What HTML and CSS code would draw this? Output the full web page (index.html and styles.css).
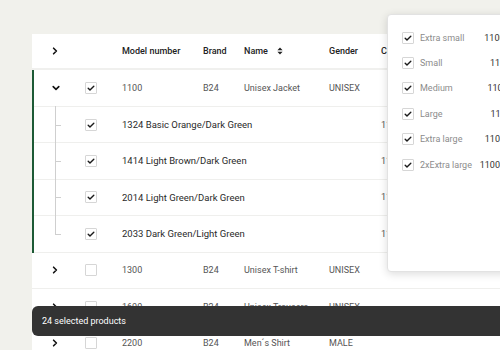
FILE: index.html
```html
<!DOCTYPE html>
<html>
<head>
<meta charset="utf-8">
<link rel="stylesheet" href="styles.css">
</head>
<body>
<div class="page">
  <div class="table">
    <div class="row head">
      <div class="c-exp"><svg class="chev" width="8" height="8" viewBox="0 0 8 8"><path d="M2.6 1.2 L5.4 4 L2.6 6.8"/></svg></div>
      <div class="c-chk"></div>
      <div>Model number</div>
      <div>Brand</div>
      <div class="sort">Name <svg width="6" height="8" viewBox="0 0 6 8"><path d="M3 0.6 L5.6 3.2 L0.4 3.2 Z M3 7.4 L5.6 4.8 L0.4 4.8 Z"/></svg></div>
      <div>Gender</div>
      <div>Color</div>
      <div>Sizes</div>
    </div>
    <div class="group">
      <div class="row">
        <div class="c-exp"><svg class="chev" width="8" height="8" viewBox="0 0 8 8"><path d="M1.2 2.6 L4 5.4 L6.8 2.6"/></svg></div>
        <div class="c-chk"><span class="cb"><svg width="12" height="12" viewBox="0 0 12 12"><path d="M3.2 6.2 L5 8 L8.8 4.2"/></svg></span></div>
        <div>1100</div>
        <div>B24</div>
        <div>Unisex Jacket</div>
        <div>UNISEX</div>
      </div>
      <div class="row sub">
        <div class="c-exp tree"></div>
        <div class="c-chk"><span class="cb"><svg width="12" height="12" viewBox="0 0 12 12"><path d="M3.2 6.2 L5 8 L8.8 4.2"/></svg></span></div>
        <div class="variant">1324 Basic Orange/Dark Green</div>
        <div>1100-1324</div>
        <div class="link">Extra small-2xExtra large</div>
      </div>
      <div class="row sub">
        <div class="c-exp tree"></div>
        <div class="c-chk"><span class="cb"><svg width="12" height="12" viewBox="0 0 12 12"><path d="M3.2 6.2 L5 8 L8.8 4.2"/></svg></span></div>
        <div class="variant">1414 Light Brown/Dark Green</div>
        <div>1100-1414</div>
        <div class="link">Extra small-2xExtra large</div>
      </div>
      <div class="row sub">
        <div class="c-exp tree"></div>
        <div class="c-chk"><span class="cb"><svg width="12" height="12" viewBox="0 0 12 12"><path d="M3.2 6.2 L5 8 L8.8 4.2"/></svg></span></div>
        <div class="variant">2014 Light Green/Dark Green</div>
        <div>1100-2014</div>
        <div class="link">Extra small-2xExtra large</div>
      </div>
      <div class="row sub last">
        <div class="c-exp tree"></div>
        <div class="c-chk"><span class="cb"><svg width="12" height="12" viewBox="0 0 12 12"><path d="M3.2 6.2 L5 8 L8.8 4.2"/></svg></span></div>
        <div class="variant">2033 Dark Green/Light Green</div>
        <div>1100-2033</div>
        <div class="link">Extra small-2xExtra large</div>
      </div>
    </div>
    <div class="row">
      <div class="c-exp"><svg class="chev" width="8" height="8" viewBox="0 0 8 8"><path d="M2.6 1.2 L5.4 4 L2.6 6.8"/></svg></div>
      <div class="c-chk"><span class="cb off"></span></div>
      <div>1300</div>
      <div>B24</div>
      <div>Unisex T-shirt</div>
      <div>UNISEX</div>
    </div>
    <div class="row">
      <div class="c-exp"><svg class="chev" width="8" height="8" viewBox="0 0 8 8"><path d="M2.6 1.2 L5.4 4 L2.6 6.8"/></svg></div>
      <div class="c-chk"><span class="cb off"></span></div>
      <div>1600</div>
      <div>B24</div>
      <div>Unisex Trousers</div>
      <div>UNISEX</div>
    </div>
    <div class="row">
      <div class="c-exp"><svg class="chev" width="8" height="8" viewBox="0 0 8 8"><path d="M2.6 1.2 L5.4 4 L2.6 6.8"/></svg></div>
      <div class="c-chk"><span class="cb off"></span></div>
      <div>2200</div>
      <div>B24</div>
      <div>Men´s Shirt</div>
      <div>MALE</div>
    </div>
  </div>
</div>

<div class="popup">
  <div class="opt"><span class="cb"><svg width="12" height="12" viewBox="0 0 12 12"><path d="M3.2 6.2 L5 8 L8.8 4.2"/></svg></span><span class="lbl">Extra small</span><span class="val">1100-XS</span></div>
  <div class="opt"><span class="cb"><svg width="12" height="12" viewBox="0 0 12 12"><path d="M3.2 6.2 L5 8 L8.8 4.2"/></svg></span><span class="lbl">Small</span><span class="val">1100-S</span></div>
  <div class="opt"><span class="cb"><svg width="12" height="12" viewBox="0 0 12 12"><path d="M3.2 6.2 L5 8 L8.8 4.2"/></svg></span><span class="lbl">Medium</span><span class="val">1100-M</span></div>
  <div class="opt"><span class="cb"><svg width="12" height="12" viewBox="0 0 12 12"><path d="M3.2 6.2 L5 8 L8.8 4.2"/></svg></span><span class="lbl">Large</span><span class="val">1100-L</span></div>
  <div class="opt"><span class="cb"><svg width="12" height="12" viewBox="0 0 12 12"><path d="M3.2 6.2 L5 8 L8.8 4.2"/></svg></span><span class="lbl">Extra large</span><span class="val">1100-XL</span></div>
  <div class="opt"><span class="cb"><svg width="12" height="12" viewBox="0 0 12 12"><path d="M3.2 6.2 L5 8 L8.8 4.2"/></svg></span><span class="lbl">2xExtra large</span><span class="val">1100-2XL</span></div>
</div>

<div class="toast">24 selected products</div>
</body>
</html>
```

FILE: styles.css
```css
* { box-sizing: border-box; }
html, body { margin: 0; padding: 0; }
body {
  width: 500px;
  height: 350px;
  overflow: hidden;
  background: #f1f1ec;
  font-family: Roboto, "Liberation Sans", sans-serif;
  font-size: 9px;
  color: #555;
  position: relative;
}
.page {
  padding: 34px 0 0 32px;
}
.table {
  background: #fff;
  width: 500px;
}
.row {
  display: grid;
  grid-template-columns: 46px 44px 81px 41px 85px 52px 75px 120px;
  align-items: center;
  height: 36.43px;
  border-bottom: 1px solid #efefed;
  white-space: nowrap;
}
.row.head {
  color: #222;
  font-weight: 500;
  border-bottom: 2px solid #f0f0ee;
}
.c-exp {
  display: flex;
  justify-content: center;
  align-items: center;
  height: 100%;
}
.chev path {
  fill: none;
  stroke: #111;
  stroke-width: 1.6;
  stroke-linecap: round;
  stroke-linejoin: round;
}
.c-chk {
  padding-left: 7px;
  display: flex;
  align-items: center;
}
.cb {
  display: inline-flex;
  width: 12px;
  height: 12px;
  border: 1px solid #d6d6d6;
  border-radius: 1px;
  background: #fff;
  align-items: center;
  justify-content: center;
}
.cb svg {
  display: block;
  margin: -1px;
}
.cb path {
  fill: none;
  stroke: #1a1a1a;
  stroke-width: 1.4;
  stroke-linecap: round;
  stroke-linejoin: round;
}
.sort {
  display: flex;
  align-items: center;
  gap: 9px;
}
.sort path { fill: #222; }
.group {
  border-left: 2px solid #1d5a35;
}
.group .row {
  grid-template-columns: 44px 44px 81px 41px 85px 52px 75px 120px;
}
.sub .variant {
  grid-column: 3 / 7;
  color: #2a2a2a;
  font-size: 9.5px;
}
.sub .link {
  color: #222;
  text-decoration: underline;
  text-underline-offset: 2px;
}
.tree {
  position: relative;
}
.tree::before {
  content: "";
  position: absolute;
  left: 21px;
  top: -1px;
  bottom: -1px;
  width: 1px;
  background: #cfcfcf;
}
.last .tree::before {
  bottom: 50%;
}
.tree::after {
  content: "";
  position: absolute;
  left: 21px;
  top: 50%;
  width: 6px;
  height: 1px;
  background: #cfcfcf;
}
.popup {
  position: absolute;
  left: 387px;
  top: 14px;
  width: 146px;
  height: 258px;
  background: #fff;
  border: 1px solid #e2e2e2;
  border-radius: 4px;
  box-shadow: 0 2px 8px rgba(0,0,0,0.14);
  padding: 10px 14px 0 14px;
}
.opt {
  display: flex;
  align-items: center;
  height: 25.4px;
  white-space: nowrap;
}
.opt .lbl {
  margin-left: 6px;
  color: #8c8c8c;
  flex: 1;
}
.opt .val {
  color: #333;
}
.toast {
  position: absolute;
  left: 32px;
  top: 306px;
  width: 500px;
  height: 30px;
  background: #333;
  border-radius: 6px;
  color: #fff;
  font-size: 9px;
  display: flex;
  align-items: center;
  padding-left: 10px;
}
```
